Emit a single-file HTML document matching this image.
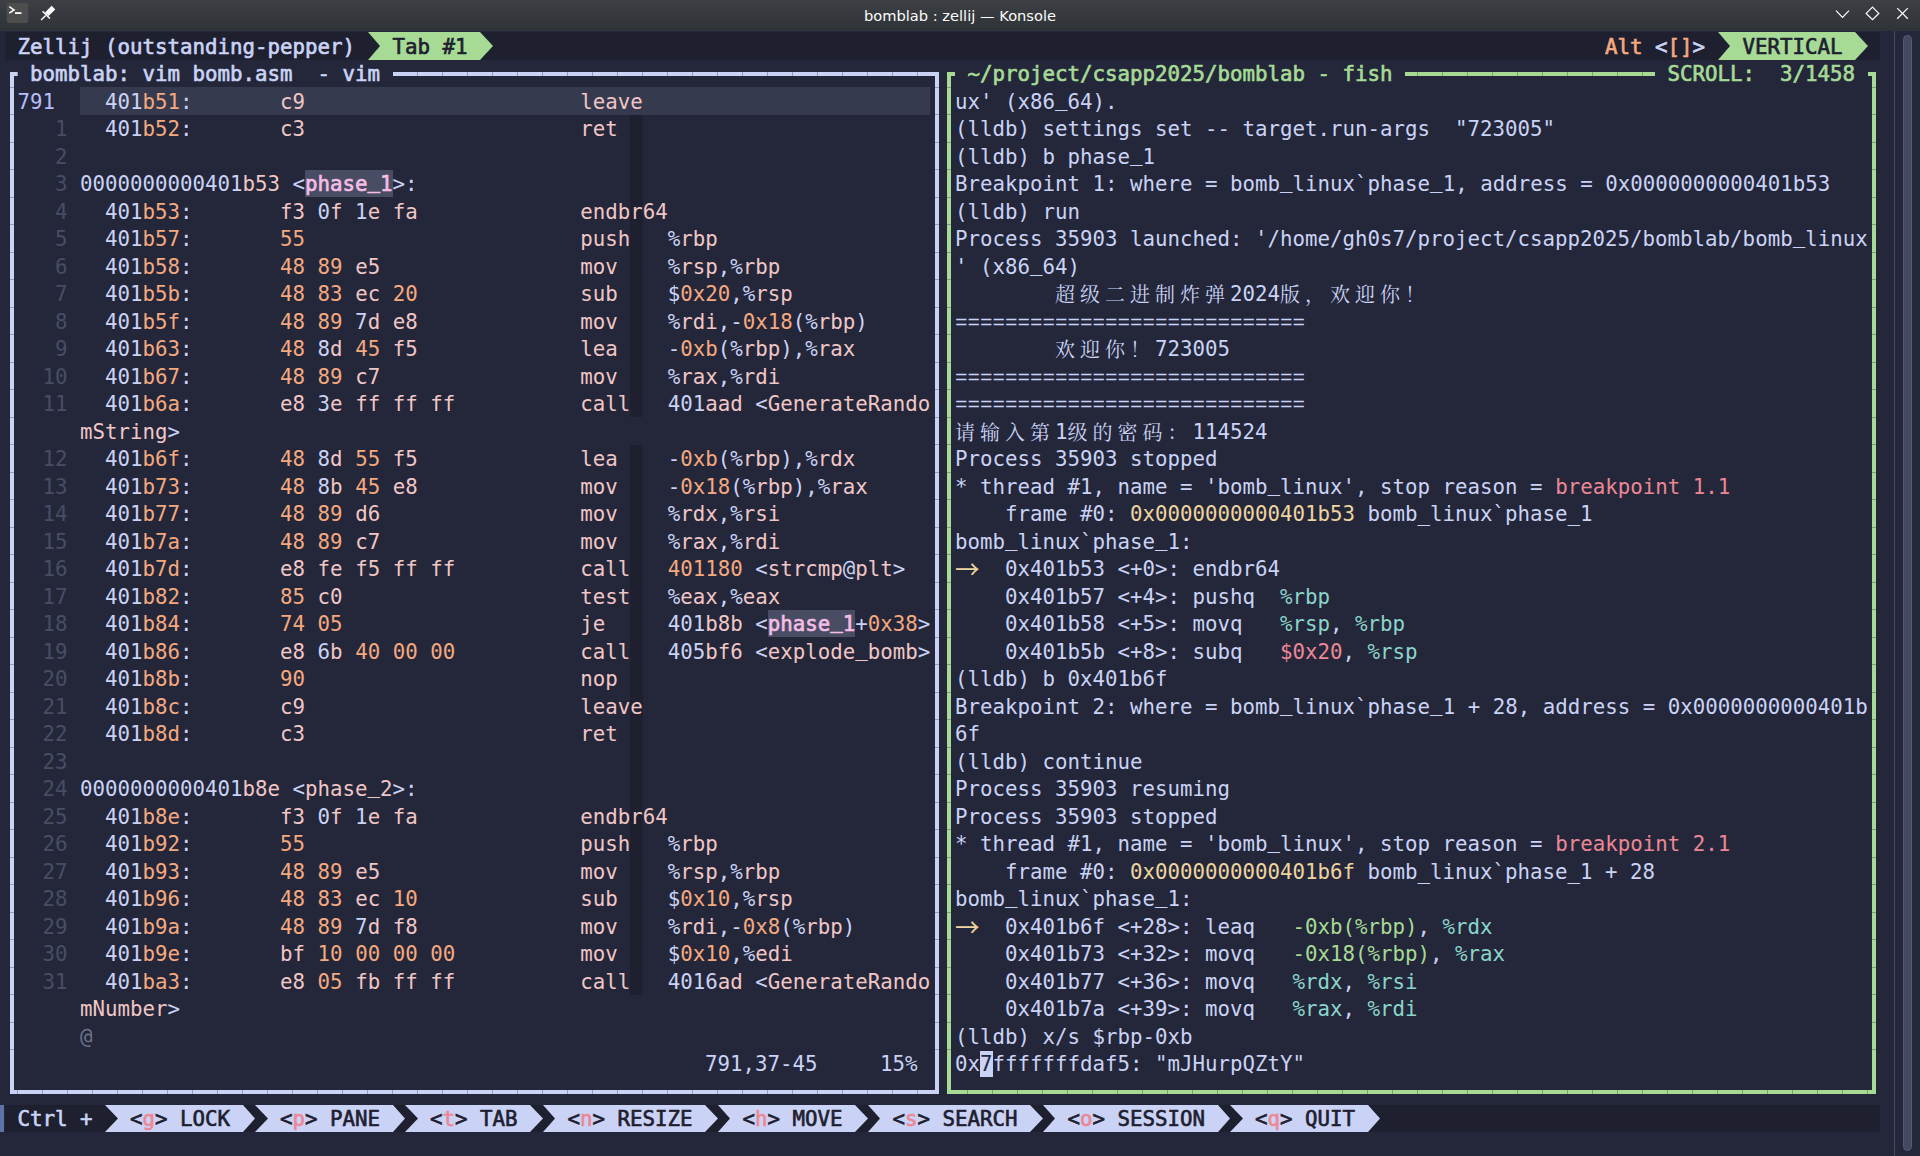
<!DOCTYPE html>
<html><head><meta charset="utf-8"><title>bomblab : zellij — Konsole</title>
<style>
html,body{margin:0;padding:0;background:#24273a;overflow:hidden}
body{width:1920px;height:1156px;position:relative}
#tb{position:absolute;left:0;top:0;width:1920px;height:31px;background:linear-gradient(#3c4045,#2f3338)}
#tt{position:absolute;left:0;top:0;width:1920px;height:30px;text-align:center;color:#fcfcfc;font:14.65px "DejaVu Sans","Liberation Sans",sans-serif;line-height:31px}
#term{position:absolute;left:0;top:0;width:1920px;height:1156px;font-family:"DejaVu Sans Mono","Liberation Mono",monospace;font-size:20.772px;color:#cad3f5}
.r{position:absolute;white-space:pre;height:28px;line-height:28px}
.bg{position:absolute}
.b{font-weight:normal;-webkit-text-stroke:0.65px currentColor}
.p{color:#f5a97f}.f{color:#f0c6c6}.g{color:#a6da95}.rd{color:#ed8796}.y{color:#eed49f}.tl{color:#8bd5ca}
.dk{color:#1e2030}.lv{color:#b7bdf8}.ln{color:#494d64}.o0{color:#6e738d}
.hl{color:#f5bde6;-webkit-text-stroke:0.65px currentColor}
.cj{display:inline-block;width:25px;font-family:"Noto Serif CJK SC",serif;font-size:20px;vertical-align:top;height:28px;line-height:28px}
.arw{display:inline-block;width:25px;height:28px;line-height:28px;vertical-align:top;color:#eed49f;font-family:"Noto Sans CJK SC",sans-serif;font-size:24.5px;position:relative;top:0px;left:0px;overflow:visible}
.eq{font-family:"Liberation Mono",monospace;font-size:20.83px}
.u{position:relative;top:-3px}
.cursor{color:#24273a}
</style></head><body>
<div id="tb"></div>
<svg class="bg" style="left:0;top:0" width="1920" height="31" viewBox="0 0 1920 31">
<rect x="6.75" y="3" width="21.5" height="20" rx="2" fill="#4d4d4d"/>
<path d="M9.3 6.7 L14 9.9 L9.3 13.1" fill="none" stroke="#fcfcfc" stroke-width="1.6"/>
<rect x="15" y="12.2" width="6.5" height="1.8" fill="#fcfcfc"/>
<g transform="translate(46.75,14.35) rotate(45)" fill="#fcfcfc"><rect x="-2.5" y="-9.5" width="5" height="9.5"/><rect x="-5.2" y="0" width="10.4" height="1.5"/><rect x="-0.7" y="1.5" width="1.4" height="6.5"/></g>
<g fill="none" stroke="#fcfcfc" stroke-width="1.25"><path d="M1836 10.6 L1842.5 17.4 L1849 10.6"/><path d="M1872.5 7.1 L1878.8 13.4 L1872.5 19.7 L1866.2 13.4 Z"/><path d="M1897.2 8.1 L1907.8 18.7 M1907.8 8.1 L1897.2 18.7"/></g>
</svg>
<div class="bg" style="left:1894px;top:31px;width:1px;height:1125px;background:#45495f"></div>
<div class="bg" style="left:1903px;top:35px;width:7px;height:1114px;border-radius:4.5px;background:#444961;border:1px solid #565b75"></div>
<div class="bg" style="left:0;top:1105px;width:4px;height:27px;background:#5d73a7"></div><div id="tt">bomblab : zellij — Konsole</div>
<div id="term">
<div class="bg" style="left:5px;top:32px;width:1875px;height:28px;background:#1e2030"></div>
<div class="bg" style="left:5px;top:1105px;width:1875px;height:27px;background:#1e2030"></div>
<div class="bg" style="left:80px;top:87px;width:850px;height:28px;background:#363a4f"></div>
<div class="bg" style="left:630px;top:115px;width:13px;height:27px;background:#1e2030"></div>
<div class="bg" style="left:630px;top:142px;width:13px;height:28px;background:#1e2030"></div>
<div class="bg" style="left:630px;top:170px;width:13px;height:27px;background:#1e2030"></div>
<div class="bg" style="left:630px;top:197px;width:13px;height:28px;background:#1e2030"></div>
<div class="bg" style="left:630px;top:225px;width:13px;height:27px;background:#1e2030"></div>
<div class="bg" style="left:630px;top:252px;width:13px;height:28px;background:#1e2030"></div>
<div class="bg" style="left:630px;top:280px;width:13px;height:27px;background:#1e2030"></div>
<div class="bg" style="left:630px;top:307px;width:13px;height:28px;background:#1e2030"></div>
<div class="bg" style="left:630px;top:335px;width:13px;height:27px;background:#1e2030"></div>
<div class="bg" style="left:630px;top:362px;width:13px;height:28px;background:#1e2030"></div>
<div class="bg" style="left:630px;top:390px;width:13px;height:27px;background:#1e2030"></div>
<div class="bg" style="left:630px;top:445px;width:13px;height:27px;background:#1e2030"></div>
<div class="bg" style="left:630px;top:472px;width:13px;height:28px;background:#1e2030"></div>
<div class="bg" style="left:630px;top:500px;width:13px;height:27px;background:#1e2030"></div>
<div class="bg" style="left:630px;top:527px;width:13px;height:28px;background:#1e2030"></div>
<div class="bg" style="left:630px;top:555px;width:13px;height:27px;background:#1e2030"></div>
<div class="bg" style="left:630px;top:582px;width:13px;height:28px;background:#1e2030"></div>
<div class="bg" style="left:630px;top:610px;width:13px;height:27px;background:#1e2030"></div>
<div class="bg" style="left:630px;top:637px;width:13px;height:28px;background:#1e2030"></div>
<div class="bg" style="left:630px;top:665px;width:13px;height:27px;background:#1e2030"></div>
<div class="bg" style="left:630px;top:692px;width:13px;height:28px;background:#1e2030"></div>
<div class="bg" style="left:630px;top:720px;width:13px;height:27px;background:#1e2030"></div>
<div class="bg" style="left:630px;top:747px;width:13px;height:28px;background:#1e2030"></div>
<div class="bg" style="left:630px;top:775px;width:13px;height:27px;background:#1e2030"></div>
<div class="bg" style="left:630px;top:802px;width:13px;height:28px;background:#1e2030"></div>
<div class="bg" style="left:630px;top:830px;width:13px;height:27px;background:#1e2030"></div>
<div class="bg" style="left:630px;top:857px;width:13px;height:28px;background:#1e2030"></div>
<div class="bg" style="left:630px;top:885px;width:13px;height:27px;background:#1e2030"></div>
<div class="bg" style="left:630px;top:912px;width:13px;height:28px;background:#1e2030"></div>
<div class="bg" style="left:630px;top:940px;width:13px;height:27px;background:#1e2030"></div>
<div class="bg" style="left:630px;top:967px;width:13px;height:28px;background:#1e2030"></div>
<div class="bg" style="left:305px;top:170px;width:88px;height:27px;background:#494d64"></div>
<div class="bg" style="left:768px;top:610px;width:87px;height:27px;background:#494d64"></div>
<div class="bg" style="left:980px;top:1051px;width:12.5px;height:26px;background:#cad3f5"></div>
<div class="r " style="top:33px;left:5px;"><span class="b"> Zellij (outstanding-pepper) </span></div>
<svg class="bg" style="left:368px;top:32px" width="12" height="28" viewBox="0 0 12 28"><rect width="12" height="28" fill="#a6da95"/><polygon points="0,0 12,14 0,28" fill="#1e2030"/></svg>
<div class="bg" style="left:380px;top:32px;width:100px;height:28px;background:#a6da95"></div>
<div class="r " style="top:33px;left:380px;"><span class="b dk"> Tab #1 </span></div>
<svg class="bg" style="left:480px;top:32px" width="13" height="28" viewBox="0 0 13 28"><rect width="13" height="28" fill="#1e2030"/><polygon points="0,0 13,14 0,28" fill="#a6da95"/></svg>
<div class="r " style="top:33px;left:1605px;"><span class="b p">Alt</span> <span class="b">&lt;</span><span class="b p">[]</span><span class="b">&gt;</span></div>
<svg class="bg" style="left:1718px;top:32px" width="12" height="28" viewBox="0 0 12 28"><rect width="12" height="28" fill="#a6da95"/><polygon points="0,0 12,14 0,28" fill="#1e2030"/></svg>
<div class="bg" style="left:1730px;top:32px;width:125px;height:28px;background:#a6da95"></div>
<div class="r " style="top:33px;left:1730px;"><span class="b dk"> VERTICAL </span></div>
<svg class="bg" style="left:1855px;top:32px" width="13" height="28" viewBox="0 0 13 28"><rect width="13" height="28" fill="#1e2030"/><polygon points="0,0 13,14 0,28" fill="#a6da95"/></svg>
<div class="bg" style="left:10px;top:72px;width:4px;height:1022px;background:#cad3f5"></div>
<div class="bg" style="left:935px;top:72px;width:4px;height:1022px;background:#cad3f5"></div>
<div class="bg" style="left:10px;top:1090px;width:929px;height:4px;background:#cad3f5"></div>
<div class="bg" style="left:10px;top:72px;width:7.5px;height:4px;background:#cad3f5"></div>
<div class="bg" style="left:392.5px;top:72px;width:546.5px;height:4px;background:#cad3f5"></div>
<div class="bg" style="left:947px;top:72px;width:4px;height:1022px;background:#a6da95"></div>
<div class="bg" style="left:1872px;top:72px;width:4px;height:1022px;background:#a6da95"></div>
<div class="bg" style="left:947px;top:1090px;width:929px;height:4px;background:#a6da95"></div>
<div class="bg" style="left:947px;top:72px;width:8px;height:4px;background:#a6da95"></div>
<div class="bg" style="left:1405px;top:72px;width:250px;height:4px;background:#a6da95"></div>
<div class="bg" style="left:1867.5px;top:72px;width:8.5px;height:4px;background:#a6da95"></div>
<div class="bg" style="left:10px;top:72px;width:929px;height:4px;background:repeating-linear-gradient(90deg,transparent 0,transparent 24px,rgba(36,39,58,0.32) 24px,rgba(36,39,58,0.32) 25px);background-position:8px 0;background-size:25px 4px"></div>
<div class="bg" style="left:10px;top:1090px;width:929px;height:4px;background:repeating-linear-gradient(90deg,transparent 0,transparent 24px,rgba(36,39,58,0.32) 24px,rgba(36,39,58,0.32) 25px);background-position:8px 0;background-size:25px 4px"></div>
<div class="bg" style="left:947px;top:72px;width:929px;height:4px;background:repeating-linear-gradient(90deg,transparent 0,transparent 24px,rgba(36,39,58,0.32) 24px,rgba(36,39,58,0.32) 25px);background-position:21px 0;background-size:25px 4px"></div>
<div class="bg" style="left:947px;top:1090px;width:929px;height:4px;background:repeating-linear-gradient(90deg,transparent 0,transparent 24px,rgba(36,39,58,0.32) 24px,rgba(36,39,58,0.32) 25px);background-position:21px 0;background-size:25px 4px"></div>
<div class="bg" style="left:10px;top:76px;width:4px;height:1014px;background:repeating-linear-gradient(180deg,transparent 0,transparent 26.5px,rgba(36,39,58,0.32) 26.5px,rgba(36,39,58,0.32) 27.5px);background-position:0 -16.0px"></div>
<div class="bg" style="left:935px;top:76px;width:4px;height:1014px;background:repeating-linear-gradient(180deg,transparent 0,transparent 26.5px,rgba(36,39,58,0.32) 26.5px,rgba(36,39,58,0.32) 27.5px);background-position:0 -16.0px"></div>
<div class="bg" style="left:947px;top:76px;width:4px;height:1014px;background:repeating-linear-gradient(180deg,transparent 0,transparent 26.5px,rgba(36,39,58,0.32) 26.5px,rgba(36,39,58,0.32) 27.5px);background-position:0 -16.0px"></div>
<div class="bg" style="left:1872px;top:76px;width:4px;height:1014px;background:repeating-linear-gradient(180deg,transparent 0,transparent 26.5px,rgba(36,39,58,0.32) 26.5px,rgba(36,39,58,0.32) 27.5px);background-position:0 -16.0px"></div>
<div class="r " style="top:60px;left:30px;"><span class="b">bomblab: vim bomb.asm  - vim</span></div>
<div class="r " style="top:60px;left:967.5px;"><span class="b g">~/project/csapp2025/bomblab - fish</span></div>
<div class="r " style="top:60px;left:1667.5px;"><span class="b g">SCROLL:  3/1458</span></div>
<div class="r " style="top:88px;left:17.5px;"><span class="lv">791</span></div>
<div class="r " style="top:88px;left:80px;">  401<span class="p">b51</span>:       <span class="f">c9</span>                      <span class="f">leave</span></div>
<div class="r " style="top:115px;left:17.5px;"><span class="ln">   1</span></div>
<div class="r " style="top:115px;left:80px;">  401<span class="p">b52</span>:       <span class="f">c3</span>                      <span class="f">ret</span></div>
<div class="r " style="top:143px;left:17.5px;"><span class="ln">   2</span></div>
<div class="r " style="top:170px;left:17.5px;"><span class="ln">   3</span></div>
<div class="r " style="top:170px;left:80px;">0000000000401<span class="f">b53</span> &lt;<span class="hl">phase<span class="u">_</span>1</span>&gt;:</div>
<div class="r " style="top:198px;left:17.5px;"><span class="ln">   4</span></div>
<div class="r " style="top:198px;left:80px;">  401<span class="p">b53</span>:       <span class="f">f3</span> 0<span class="f">f</span> 1<span class="f">e</span> <span class="f">fa</span>             <span class="f">endbr64</span></div>
<div class="r " style="top:225px;left:17.5px;"><span class="ln">   5</span></div>
<div class="r " style="top:225px;left:80px;">  401<span class="p">b57</span>:       <span class="p">55</span>                      <span class="f">push</span>   %<span class="f">rbp</span></div>
<div class="r " style="top:253px;left:17.5px;"><span class="ln">   6</span></div>
<div class="r " style="top:253px;left:80px;">  401<span class="p">b58</span>:       <span class="p">48</span> <span class="p">89</span> <span class="f">e5</span>                <span class="f">mov</span>    %<span class="f">rsp</span>,%<span class="f">rbp</span></div>
<div class="r " style="top:280px;left:17.5px;"><span class="ln">   7</span></div>
<div class="r " style="top:280px;left:80px;">  401<span class="p">b5b</span>:       <span class="p">48</span> <span class="p">83</span> <span class="f">ec</span> <span class="p">20</span>             <span class="f">sub</span>    $<span class="p">0x20</span>,%<span class="f">rsp</span></div>
<div class="r " style="top:308px;left:17.5px;"><span class="ln">   8</span></div>
<div class="r " style="top:308px;left:80px;">  401<span class="p">b5f</span>:       <span class="p">48</span> <span class="p">89</span> 7<span class="f">d</span> <span class="f">e8</span>             <span class="f">mov</span>    %<span class="f">rdi</span>,-<span class="p">0x18</span>(%<span class="f">rbp</span>)</div>
<div class="r " style="top:335px;left:17.5px;"><span class="ln">   9</span></div>
<div class="r " style="top:335px;left:80px;">  401<span class="p">b63</span>:       <span class="p">48</span> 8<span class="f">d</span> <span class="p">45</span> <span class="f">f5</span>             <span class="f">lea</span>    -<span class="p">0xb</span>(%<span class="f">rbp</span>),%<span class="f">rax</span></div>
<div class="r " style="top:363px;left:17.5px;"><span class="ln">  10</span></div>
<div class="r " style="top:363px;left:80px;">  401<span class="p">b67</span>:       <span class="p">48</span> <span class="p">89</span> <span class="f">c7</span>                <span class="f">mov</span>    %<span class="f">rax</span>,%<span class="f">rdi</span></div>
<div class="r " style="top:390px;left:17.5px;"><span class="ln">  11</span></div>
<div class="r " style="top:390px;left:80px;">  401<span class="p">b6a</span>:       <span class="f">e8</span> 3<span class="f">e</span> <span class="f">ff</span> <span class="f">ff</span> <span class="f">ff</span>          <span class="f">call</span>   401<span class="f">aad</span> &lt;<span class="f">GenerateRando</span></div>
<div class="r " style="top:418px;left:80px;"><span class="f">mString</span>&gt;</div>
<div class="r " style="top:445px;left:17.5px;"><span class="ln">  12</span></div>
<div class="r " style="top:445px;left:80px;">  401<span class="p">b6f</span>:       <span class="p">48</span> 8<span class="f">d</span> <span class="p">55</span> <span class="f">f5</span>             <span class="f">lea</span>    -<span class="p">0xb</span>(%<span class="f">rbp</span>),%<span class="f">rdx</span></div>
<div class="r " style="top:473px;left:17.5px;"><span class="ln">  13</span></div>
<div class="r " style="top:473px;left:80px;">  401<span class="p">b73</span>:       <span class="p">48</span> 8<span class="f">b</span> <span class="p">45</span> <span class="f">e8</span>             <span class="f">mov</span>    -<span class="p">0x18</span>(%<span class="f">rbp</span>),%<span class="f">rax</span></div>
<div class="r " style="top:500px;left:17.5px;"><span class="ln">  14</span></div>
<div class="r " style="top:500px;left:80px;">  401<span class="p">b77</span>:       <span class="p">48</span> <span class="p">89</span> <span class="f">d6</span>                <span class="f">mov</span>    %<span class="f">rdx</span>,%<span class="f">rsi</span></div>
<div class="r " style="top:528px;left:17.5px;"><span class="ln">  15</span></div>
<div class="r " style="top:528px;left:80px;">  401<span class="p">b7a</span>:       <span class="p">48</span> <span class="p">89</span> <span class="f">c7</span>                <span class="f">mov</span>    %<span class="f">rax</span>,%<span class="f">rdi</span></div>
<div class="r " style="top:555px;left:17.5px;"><span class="ln">  16</span></div>
<div class="r " style="top:555px;left:80px;">  401<span class="p">b7d</span>:       <span class="f">e8</span> <span class="f">fe</span> <span class="f">f5</span> <span class="f">ff</span> <span class="f">ff</span>          <span class="f">call</span>   <span class="p">401180</span> &lt;<span class="f">strcmp</span>@<span class="f">plt</span>&gt;</div>
<div class="r " style="top:583px;left:17.5px;"><span class="ln">  17</span></div>
<div class="r " style="top:583px;left:80px;">  401<span class="p">b82</span>:       <span class="p">85</span> <span class="f">c0</span>                   <span class="f">test</span>   %<span class="f">eax</span>,%<span class="f">eax</span></div>
<div class="r " style="top:610px;left:17.5px;"><span class="ln">  18</span></div>
<div class="r " style="top:610px;left:80px;">  401<span class="p">b84</span>:       <span class="p">74</span> <span class="p">05</span>                   <span class="f">je</span>     401<span class="f">b8b</span> &lt;<span class="hl">phase<span class="u">_</span>1</span>+<span class="p">0x38</span>&gt;</div>
<div class="r " style="top:638px;left:17.5px;"><span class="ln">  19</span></div>
<div class="r " style="top:638px;left:80px;">  401<span class="p">b86</span>:       <span class="f">e8</span> 6<span class="f">b</span> <span class="p">40</span> <span class="p">00</span> <span class="p">00</span>          <span class="f">call</span>   405<span class="f">bf6</span> &lt;<span class="f">explode<span class="u">_</span>bomb</span>&gt;</div>
<div class="r " style="top:665px;left:17.5px;"><span class="ln">  20</span></div>
<div class="r " style="top:665px;left:80px;">  401<span class="p">b8b</span>:       <span class="p">90</span>                      <span class="f">nop</span></div>
<div class="r " style="top:693px;left:17.5px;"><span class="ln">  21</span></div>
<div class="r " style="top:693px;left:80px;">  401<span class="p">b8c</span>:       <span class="f">c9</span>                      <span class="f">leave</span></div>
<div class="r " style="top:720px;left:17.5px;"><span class="ln">  22</span></div>
<div class="r " style="top:720px;left:80px;">  401<span class="p">b8d</span>:       <span class="f">c3</span>                      <span class="f">ret</span></div>
<div class="r " style="top:748px;left:17.5px;"><span class="ln">  23</span></div>
<div class="r " style="top:775px;left:17.5px;"><span class="ln">  24</span></div>
<div class="r " style="top:775px;left:80px;">0000000000401<span class="f">b8e</span> &lt;<span class="f">phase<span class="u">_</span>2</span>&gt;:</div>
<div class="r " style="top:803px;left:17.5px;"><span class="ln">  25</span></div>
<div class="r " style="top:803px;left:80px;">  401<span class="p">b8e</span>:       <span class="f">f3</span> 0<span class="f">f</span> 1<span class="f">e</span> <span class="f">fa</span>             <span class="f">endbr64</span></div>
<div class="r " style="top:830px;left:17.5px;"><span class="ln">  26</span></div>
<div class="r " style="top:830px;left:80px;">  401<span class="p">b92</span>:       <span class="p">55</span>                      <span class="f">push</span>   %<span class="f">rbp</span></div>
<div class="r " style="top:858px;left:17.5px;"><span class="ln">  27</span></div>
<div class="r " style="top:858px;left:80px;">  401<span class="p">b93</span>:       <span class="p">48</span> <span class="p">89</span> <span class="f">e5</span>                <span class="f">mov</span>    %<span class="f">rsp</span>,%<span class="f">rbp</span></div>
<div class="r " style="top:885px;left:17.5px;"><span class="ln">  28</span></div>
<div class="r " style="top:885px;left:80px;">  401<span class="p">b96</span>:       <span class="p">48</span> <span class="p">83</span> <span class="f">ec</span> <span class="p">10</span>             <span class="f">sub</span>    $<span class="p">0x10</span>,%<span class="f">rsp</span></div>
<div class="r " style="top:913px;left:17.5px;"><span class="ln">  29</span></div>
<div class="r " style="top:913px;left:80px;">  401<span class="p">b9a</span>:       <span class="p">48</span> <span class="p">89</span> 7<span class="f">d</span> <span class="f">f8</span>             <span class="f">mov</span>    %<span class="f">rdi</span>,-<span class="p">0x8</span>(%<span class="f">rbp</span>)</div>
<div class="r " style="top:940px;left:17.5px;"><span class="ln">  30</span></div>
<div class="r " style="top:940px;left:80px;">  401<span class="p">b9e</span>:       <span class="f">bf</span> <span class="p">10</span> <span class="p">00</span> <span class="p">00</span> <span class="p">00</span>          <span class="f">mov</span>    $<span class="p">0x10</span>,%<span class="f">edi</span></div>
<div class="r " style="top:968px;left:17.5px;"><span class="ln">  31</span></div>
<div class="r " style="top:968px;left:80px;">  401<span class="p">ba3</span>:       <span class="f">e8</span> <span class="p">05</span> <span class="f">fb</span> <span class="f">ff</span> <span class="f">ff</span>          <span class="f">call</span>   4016<span class="f">ad</span> &lt;<span class="f">GenerateRando</span></div>
<div class="r " style="top:995px;left:80px;"><span class="f">mNumber</span>&gt;</div>
<div class="r " style="top:1023px;left:80px;"><span class="o0">@</span></div>
<div class="r " style="top:1050px;left:705px;">791,37-45     15%</div>
<div class="r " style="top:88px;left:955px;">ux' (x86<span class="u">_</span>64).</div>
<div class="r " style="top:115px;left:955px;">(lldb) settings set -- target.run-args  "723005"</div>
<div class="r " style="top:143px;left:955px;">(lldb) b phase<span class="u">_</span>1</div>
<div class="r " style="top:170px;left:955px;">Breakpoint 1: where = bomb<span class="u">_</span>linux`phase<span class="u">_</span>1, address = 0x0000000000401b53</div>
<div class="r " style="top:198px;left:955px;">(lldb) run</div>
<div class="r " style="top:225px;left:955px;">Process 35903 launched: '/home/gh0s7/project/csapp2025/bomblab/bomb<span class="u">_</span>linux</div>
<div class="r " style="top:253px;left:955px;">' (x86<span class="u">_</span>64)</div>
<div class="r " style="top:280px;left:955px;">        <span class="cj">超</span><span class="cj">级</span><span class="cj">二</span><span class="cj">进</span><span class="cj">制</span><span class="cj">炸</span><span class="cj">弹</span>2024<span class="cj">版</span><span class="cj">，</span><span class="cj">欢</span><span class="cj">迎</span><span class="cj">你</span><span class="cj">！</span></div>
<div class="r " style="top:308px;left:955px;"><span class="eq">============================</span></div>
<div class="r " style="top:335px;left:955px;">        <span class="cj">欢</span><span class="cj">迎</span><span class="cj">你</span><span class="cj">！</span>723005</div>
<div class="r " style="top:363px;left:955px;"><span class="eq">============================</span></div>
<div class="r " style="top:390px;left:955px;"><span class="eq">============================</span></div>
<div class="r " style="top:418px;left:955px;"><span class="cj">请</span><span class="cj">输</span><span class="cj">入</span><span class="cj">第</span>1<span class="cj">级</span><span class="cj">的</span><span class="cj">密</span><span class="cj">码</span><span class="cj">：</span>114524</div>
<div class="r " style="top:445px;left:955px;">Process 35903 stopped</div>
<div class="r " style="top:473px;left:955px;">* thread #1, name = 'bomb<span class="u">_</span>linux', stop reason = <span class="rd">breakpoint 1.1</span></div>
<div class="r " style="top:500px;left:955px;">    frame #0: <span class="y">0x0000000000401b53</span> bomb_linux`phase_1</div>
<div class="r " style="top:528px;left:955px;">bomb<span class="u">_</span>linux`phase<span class="u">_</span>1:</div>
<div class="r " style="top:555px;left:955px;"><span class="arw">→</span>  0x401b53 &lt;+0&gt;: endbr64</div>
<div class="r " style="top:583px;left:955px;">    0x401b57 &lt;+4&gt;: pushq  <span class="tl">%rbp</span></div>
<div class="r " style="top:610px;left:955px;">    0x401b58 &lt;+5&gt;: movq   <span class="tl">%rsp</span>, <span class="tl">%rbp</span></div>
<div class="r " style="top:638px;left:955px;">    0x401b5b &lt;+8&gt;: subq   <span class="rd">$0x20</span>, <span class="tl">%rsp</span></div>
<div class="r " style="top:665px;left:955px;">(lldb) b 0x401b6f</div>
<div class="r " style="top:693px;left:955px;">Breakpoint 2: where = bomb<span class="u">_</span>linux`phase<span class="u">_</span>1 + 28, address = 0x0000000000401b</div>
<div class="r " style="top:720px;left:955px;">6f</div>
<div class="r " style="top:748px;left:955px;">(lldb) continue</div>
<div class="r " style="top:775px;left:955px;">Process 35903 resuming</div>
<div class="r " style="top:803px;left:955px;">Process 35903 stopped</div>
<div class="r " style="top:830px;left:955px;">* thread #1, name = 'bomb<span class="u">_</span>linux', stop reason = <span class="rd">breakpoint 2.1</span></div>
<div class="r " style="top:858px;left:955px;">    frame #0: <span class="y">0x0000000000401b6f</span> bomb_linux`phase_1 + 28</div>
<div class="r " style="top:885px;left:955px;">bomb<span class="u">_</span>linux`phase<span class="u">_</span>1:</div>
<div class="r " style="top:913px;left:955px;"><span class="arw">→</span>  0x401b6f &lt;+28&gt;: leaq   <span class="g">-0xb(%rbp)</span>, <span class="tl">%rdx</span></div>
<div class="r " style="top:940px;left:955px;">    0x401b73 &lt;+32&gt;: movq   <span class="g">-0x18(%rbp)</span>, <span class="tl">%rax</span></div>
<div class="r " style="top:968px;left:955px;">    0x401b77 &lt;+36&gt;: movq   <span class="tl">%rdx</span>, <span class="tl">%rsi</span></div>
<div class="r " style="top:995px;left:955px;">    0x401b7a &lt;+39&gt;: movq   <span class="tl">%rax</span>, <span class="tl">%rdi</span></div>
<div class="r " style="top:1023px;left:955px;">(lldb) x/s $rbp-0xb</div>
<div class="r " style="top:1050px;left:955px;">0x<span class="cursor">7</span>fffffffdaf5: &quot;mJHurpQZtY&quot;</div>
<div class="r " style="top:1105px;left:5px;"><span class="b"> Ctrl + </span></div>
<svg class="bg" style="left:105px;top:1105px" width="13" height="27" viewBox="0 0 13 27"><rect width="13" height="27" fill="#cad3f5"/><polygon points="0,0 13,13.5 0,27" fill="#1e2030"/></svg>
<div class="bg" style="left:118px;top:1105px;width:125px;height:27px;background:#cad3f5"></div>
<div class="r " style="top:1105px;left:117.5px;"><span class="b dk"> &lt;</span><span class="b rd">g</span><span class="b dk">&gt; LOCK </span></div>
<svg class="bg" style="left:243px;top:1105px" width="12" height="27" viewBox="0 0 12 27"><rect width="12" height="27" fill="#1e2030"/><polygon points="0,0 12,13.5 0,27" fill="#cad3f5"/></svg>
<svg class="bg" style="left:255px;top:1105px" width="13" height="27" viewBox="0 0 13 27"><rect width="13" height="27" fill="#cad3f5"/><polygon points="0,0 13,13.5 0,27" fill="#1e2030"/></svg>
<div class="bg" style="left:268px;top:1105px;width:125px;height:27px;background:#cad3f5"></div>
<div class="r " style="top:1105px;left:267.5px;"><span class="b dk"> &lt;</span><span class="b rd">p</span><span class="b dk">&gt; PANE </span></div>
<svg class="bg" style="left:393px;top:1105px" width="12" height="27" viewBox="0 0 12 27"><rect width="12" height="27" fill="#1e2030"/><polygon points="0,0 12,13.5 0,27" fill="#cad3f5"/></svg>
<svg class="bg" style="left:405px;top:1105px" width="13" height="27" viewBox="0 0 13 27"><rect width="13" height="27" fill="#cad3f5"/><polygon points="0,0 13,13.5 0,27" fill="#1e2030"/></svg>
<div class="bg" style="left:418px;top:1105px;width:112px;height:27px;background:#cad3f5"></div>
<div class="r " style="top:1105px;left:417.5px;"><span class="b dk"> &lt;</span><span class="b rd">t</span><span class="b dk">&gt; TAB </span></div>
<svg class="bg" style="left:530px;top:1105px" width="13" height="27" viewBox="0 0 13 27"><rect width="13" height="27" fill="#1e2030"/><polygon points="0,0 13,13.5 0,27" fill="#cad3f5"/></svg>
<svg class="bg" style="left:543px;top:1105px" width="12" height="27" viewBox="0 0 12 27"><rect width="12" height="27" fill="#cad3f5"/><polygon points="0,0 12,13.5 0,27" fill="#1e2030"/></svg>
<div class="bg" style="left:555px;top:1105px;width:150px;height:27px;background:#cad3f5"></div>
<div class="r " style="top:1105px;left:555px;"><span class="b dk"> &lt;</span><span class="b rd">n</span><span class="b dk">&gt; RESIZE </span></div>
<svg class="bg" style="left:705px;top:1105px" width="13" height="27" viewBox="0 0 13 27"><rect width="13" height="27" fill="#1e2030"/><polygon points="0,0 13,13.5 0,27" fill="#cad3f5"/></svg>
<svg class="bg" style="left:718px;top:1105px" width="12" height="27" viewBox="0 0 12 27"><rect width="12" height="27" fill="#cad3f5"/><polygon points="0,0 12,13.5 0,27" fill="#1e2030"/></svg>
<div class="bg" style="left:730px;top:1105px;width:125px;height:27px;background:#cad3f5"></div>
<div class="r " style="top:1105px;left:730px;"><span class="b dk"> &lt;</span><span class="b rd">h</span><span class="b dk">&gt; MOVE </span></div>
<svg class="bg" style="left:855px;top:1105px" width="13" height="27" viewBox="0 0 13 27"><rect width="13" height="27" fill="#1e2030"/><polygon points="0,0 13,13.5 0,27" fill="#cad3f5"/></svg>
<svg class="bg" style="left:868px;top:1105px" width="12" height="27" viewBox="0 0 12 27"><rect width="12" height="27" fill="#cad3f5"/><polygon points="0,0 12,13.5 0,27" fill="#1e2030"/></svg>
<div class="bg" style="left:880px;top:1105px;width:150px;height:27px;background:#cad3f5"></div>
<div class="r " style="top:1105px;left:880px;"><span class="b dk"> &lt;</span><span class="b rd">s</span><span class="b dk">&gt; SEARCH </span></div>
<svg class="bg" style="left:1030px;top:1105px" width="13" height="27" viewBox="0 0 13 27"><rect width="13" height="27" fill="#1e2030"/><polygon points="0,0 13,13.5 0,27" fill="#cad3f5"/></svg>
<svg class="bg" style="left:1043px;top:1105px" width="12" height="27" viewBox="0 0 12 27"><rect width="12" height="27" fill="#cad3f5"/><polygon points="0,0 12,13.5 0,27" fill="#1e2030"/></svg>
<div class="bg" style="left:1055px;top:1105px;width:163px;height:27px;background:#cad3f5"></div>
<div class="r " style="top:1105px;left:1055px;"><span class="b dk"> &lt;</span><span class="b rd">o</span><span class="b dk">&gt; SESSION </span></div>
<svg class="bg" style="left:1218px;top:1105px" width="12" height="27" viewBox="0 0 12 27"><rect width="12" height="27" fill="#1e2030"/><polygon points="0,0 12,13.5 0,27" fill="#cad3f5"/></svg>
<svg class="bg" style="left:1230px;top:1105px" width="13" height="27" viewBox="0 0 13 27"><rect width="13" height="27" fill="#cad3f5"/><polygon points="0,0 13,13.5 0,27" fill="#1e2030"/></svg>
<div class="bg" style="left:1243px;top:1105px;width:125px;height:27px;background:#cad3f5"></div>
<div class="r " style="top:1105px;left:1242.5px;"><span class="b dk"> &lt;</span><span class="b rd">q</span><span class="b dk">&gt; QUIT </span></div>
<svg class="bg" style="left:1368px;top:1105px" width="12" height="27" viewBox="0 0 12 27"><rect width="12" height="27" fill="#1e2030"/><polygon points="0,0 12,13.5 0,27" fill="#cad3f5"/></svg>
</div>
</body></html>
